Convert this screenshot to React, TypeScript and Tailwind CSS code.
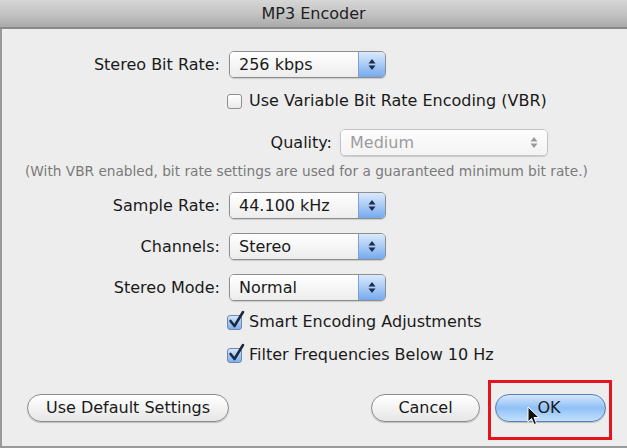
import React from "react";

const font = { fontFamily: '"DejaVu Sans", "Liberation Sans", sans-serif' };

function Arrows({ disabled }: { disabled?: boolean }) {
  const c = disabled ? "#9a9a9a" : "#1c2b4a";
  return (
    <svg width="8" height="13" viewBox="0 0 8 13">
      <polygon points="4,1 7.5,5.5 0.5,5.5" fill={c} />
      <polygon points="0.5,7.5 7.5,7.5 4,12" fill={c} />
    </svg>
  );
}

function Popup({ value, width, disabled }: { value: string; width: number; disabled?: boolean }) {
  return (
    <div
      className={`flex h-[27px] items-stretch rounded-[5px] border ${disabled ? "border-[#c4c4c4]" : "border-[#8e8e8e]"} overflow-hidden shadow-[0_1px_1px_rgba(0,0,0,0.15)]`}
      style={{ width }}
    >
      <div
        className={`flex flex-1 items-center pl-[9px] text-[16px] ${disabled ? "text-[#9c9c9c] bg-gradient-to-b from-[#fdfdfd] to-[#f3f3f3]" : "text-[#1a1a1a] bg-gradient-to-b from-[#ffffff] via-[#f6f6f6] to-[#ececec]"}`}
      >
        {value}
      </div>
      {disabled ? (
        <div className="flex w-[26px] items-center justify-center bg-gradient-to-b from-[#fdfdfd] to-[#f3f3f3]">
          <Arrows disabled />
        </div>
      ) : (
        <div className="flex w-[27px] items-center justify-center border-l border-[#7f9fcf] bg-gradient-to-b from-[#dbe9fc] via-[#a9cbf5] to-[#74a9ee]">
          <Arrows />
        </div>
      )}
    </div>
  );
}

function Check({ checked }: { checked?: boolean }) {
  return (
    <div className="relative h-[15px] w-[15px]">
      <div
        className={`h-[15px] w-[15px] rounded-[3px] border ${checked ? "border-[#6d87ad] bg-gradient-to-b from-[#d6e6fb] via-[#a8c9f2] to-[#7fb0ec]" : "border-[#8f8f8f] bg-gradient-to-b from-[#ffffff] to-[#e9e9e9]"}`}
      />
      {checked && (
        <svg className="absolute left-[1px] top-[-5px]" width="17" height="19" viewBox="0 0 17 19">
          <path d="M2.5 11 L6.5 16 L15 2" fill="none" stroke="#1b2a44" strokeWidth="2.6" strokeLinecap="round" strokeLinejoin="round" />
        </svg>
      )}
    </div>
  );
}

function LabeledPopup({ label, value }: { label: string; value: string }) {
  return (
    <div className="flex h-[27px] items-center">
      <div className="w-[227px] pr-[9px] text-right text-[16px] text-[#1a1a1a]">{label}</div>
      <Popup value={value} width={157} />
    </div>
  );
}

function Button({ children, primary, width }: { children: React.ReactNode; primary?: boolean; width: number }) {
  return (
    <div
      className={`flex h-[28px] items-center justify-center rounded-full border text-[16px] text-[#1a1a1a] shadow-[0_1px_1px_rgba(0,0,0,0.2)] ${primary ? "border-[#5a7fb5] bg-gradient-to-b from-[#d4e6fd] via-[#8fc0f6] to-[#c3e0fd]" : "border-[#8c8c8c] bg-gradient-to-b from-[#ffffff] via-[#f3f3f3] to-[#e6e6e6]"}`}
      style={{ width }}
    >
      {children}
    </div>
  );
}

export default function App() {
  return (
    <div className="relative flex h-[448px] w-[627px] flex-col overflow-hidden bg-[#ededed]" style={font}>
      <div className="flex h-[29px] shrink-0 items-center justify-center border-b-2 border-[#8a8a8a] bg-gradient-to-b from-[#d6d6d6] via-[#c4c4c4] to-[#a9a9a9] text-[16px] text-[#1e1e1e]">
        MP3 Encoder
      </div>
      <div className="flex flex-1 flex-col border-b-2 border-l-2 border-[#9a9a9a] bg-[#ededed]">
        <div className="mt-[22px]">
          <LabeledPopup label="Stereo Bit Rate:" value="256 kbps" />
        </div>
        <div className="mt-[13px] flex h-[20px] items-center pl-[225px]">
          <Check />
          <span className="ml-[7px] text-[16px] text-[#1a1a1a]">Use Variable Bit Rate Encoding (VBR)</span>
        </div>
        <div className="mt-[18px] flex h-[27px] items-center">
          <div className="w-[338px] pr-[8px] text-right text-[16px] text-[#1a1a1a]">Quality:</div>
          <Popup value="Medium" width={208} disabled />
        </div>
        <div className="mt-[7px] flex h-[16px] items-center pl-[23px] text-[13.7px] text-[#7a7a7a] whitespace-nowrap">
          (With VBR enabled, bit rate settings are used for a guaranteed minimum bit rate.)
        </div>
        <div className="mt-[13px]">
          <LabeledPopup label="Sample Rate:" value="44.100 kHz" />
        </div>
        <div className="mt-[14px]">
          <LabeledPopup label="Channels:" value="Stereo" />
        </div>
        <div className="mt-[14px]">
          <LabeledPopup label="Stereo Mode:" value="Normal" />
        </div>
        <div className="mt-[11px] flex h-[20px] items-center pl-[225px]">
          <Check checked />
          <span className="ml-[7px] text-[16px] text-[#1a1a1a]">Smart Encoding Adjustments</span>
        </div>
        <div className="mt-[13px] flex h-[20px] items-center pl-[225px]">
          <Check checked />
          <span className="ml-[7px] text-[16px] text-[#1a1a1a]">Filter Frequencies Below 10 Hz</span>
        </div>
        <div className="mt-[29px] flex items-center pl-[25px] pr-[21px]">
          <Button width={202}>Use Default Settings</Button>
          <div className="flex-1" />
          <Button width={109}>Cancel</Button>
          <div className="w-[15px]" />
          <Button width={111} primary>
            <span className="pr-[3px]">OK</span>
          </Button>
        </div>
      </div>
      <div className="absolute left-[488px] top-[380px] h-[60px] w-[124px] border-[3px] border-[#e3141d]" />
      <svg className="absolute left-[527px] top-[406px]" width="14" height="20" viewBox="0 0 14 20">
        <path d="M1 1 L1 16 L4.5 12.5 L7 18.5 L9.5 17.5 L7 11.5 L12 11.5 Z" fill="#111" stroke="#fff" strokeWidth="1" strokeLinejoin="round" />
      </svg>
    </div>
  );
}
